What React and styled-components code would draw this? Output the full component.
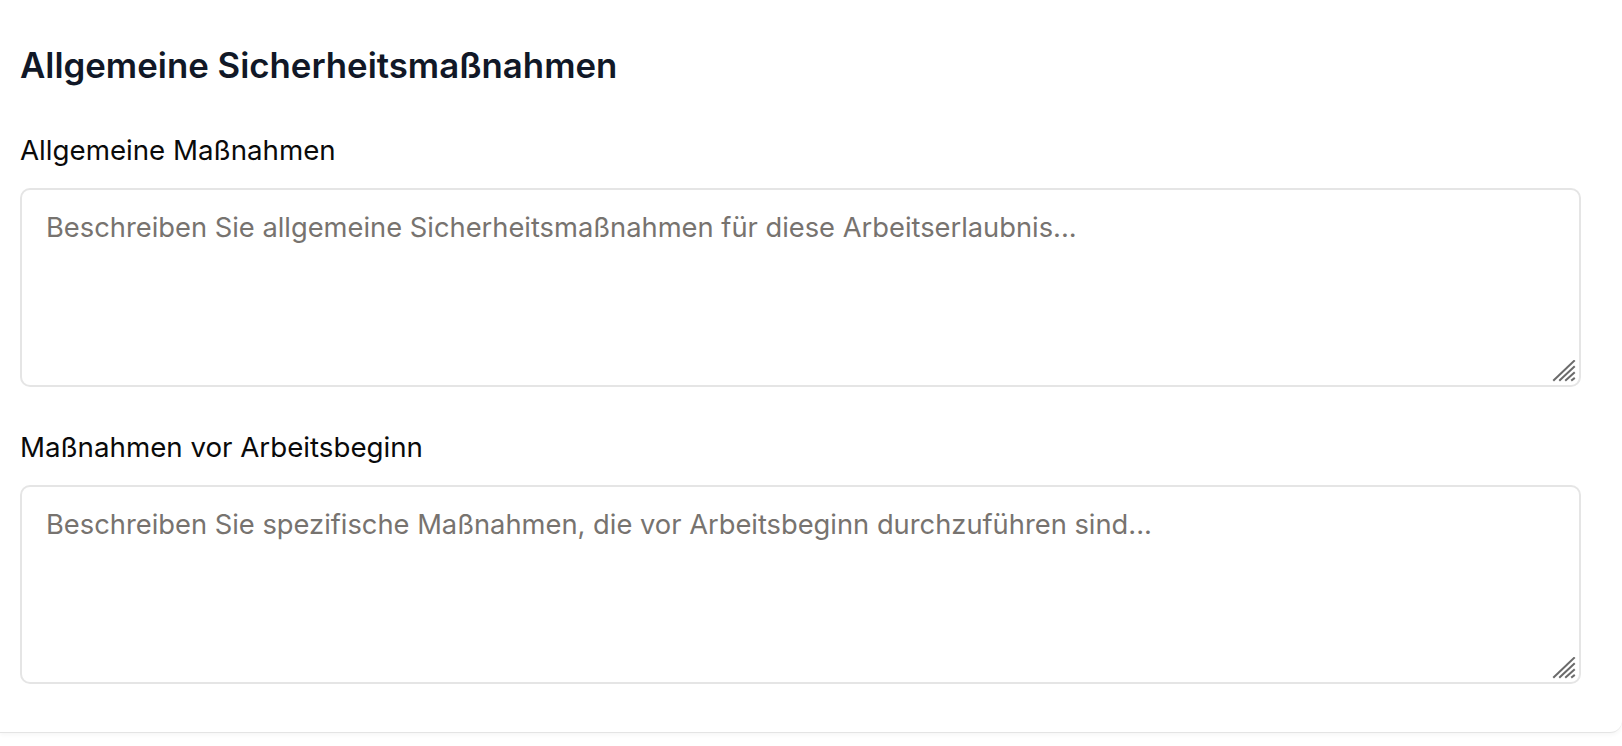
import React from 'react'
import styled, { createGlobalStyle } from 'styled-components'

const GlobalStyle = createGlobalStyle`
    html, body {
        margin: 0;
        padding: 0;
        background: #fff;
        font-family: Inter, "Noto Sans", sans-serif;
    }
`

const Page = styled.div`
    width: 1622px;
    height: 746px;
    overflow: hidden;
    background: #fff;
`

const Card = styled.section`
    background: #fff;
    padding: 43px 41px 48px 20px;
    border-bottom: 1px solid #e4e4e4;
    border-bottom-right-radius: 12px;
    box-shadow: 0 2px 4px rgba(0, 0, 0, 0.04);
`

const Title = styled.h2`
    margin: 0 0 45px;
    font-size: 34.8px;
    line-height: 44px;
    font-weight: 600;
    color: #111827;
`

const Field = styled.div`
    display: flex;
    flex-direction: column;
    gap: 20px;
    & + & {
        margin-top: 42px;
    }
`

const Label = styled.label`
    font-size: 27.7px;
    line-height: 36px;
    font-weight: 400;
    color: #0a0a0a;
`

const AreaWrap = styled.div`
    position: relative;
`

const TextArea = styled.textarea`
    display: block;
    box-sizing: border-box;
    width: 100%;
    height: ${(p) => p.$height}px;
    padding: 18px 24px;
    border: 2px solid #e5e5e5;
    border-radius: 10px;
    background: #fff;
    font-family: Inter, "Noto Sans", sans-serif;
    font-size: 27.3px;
    line-height: 40px;
    color: #111;
    resize: none;
    outline: none;
    &::placeholder {
        color: #77736f;
    }
`

const Grip = styled.svg`
    position: absolute;
    right: 5px;
    bottom: 5px;
    width: 24px;
    height: 22px;
    pointer-events: none;
`

const ResizeGrip = () => (
    <Grip viewBox="0 0 24 22">
        <g stroke="#6b6b6b" strokeWidth="2" strokeLinecap="square">
            <line x1="2" y1="20" x2="22" y2="1" />
            <line x1="8" y1="20" x2="22" y2="7" />
            <line x1="14" y1="20" x2="22" y2="13" />
            <line x1="20" y1="20" x2="22" y2="18.5" />
        </g>
    </Grip>
)

const fields = [
    {
        id: 'allgemein',
        label: 'Allgemeine Maßnahmen',
        placeholder: 'Beschreiben Sie allgemeine Sicherheitsmaßnahmen für diese Arbeitserlaubnis...',
    },
    {
        id: 'vorBeginn',
        label: 'Maßnahmen vor Arbeitsbeginn',
        placeholder: 'Beschreiben Sie spezifische Maßnahmen, die vor Arbeitsbeginn durchzuführen sind...',
    },
]

export default function App() {
    return (
        <>
            <GlobalStyle />
            <Page>
                <Card>
                    <Title>Allgemeine Sicherheitsmaßnahmen</Title>
                    {fields.map((f) => (
                        <Field key={f.id}>
                            <Label htmlFor={f.id}>{f.label}</Label>
                            <AreaWrap>
                                <TextArea id={f.id} $height={199} placeholder={f.placeholder} />
                                <ResizeGrip />
                            </AreaWrap>
                        </Field>
                    ))}
                </Card>
            </Page>
        </>
    )
}
